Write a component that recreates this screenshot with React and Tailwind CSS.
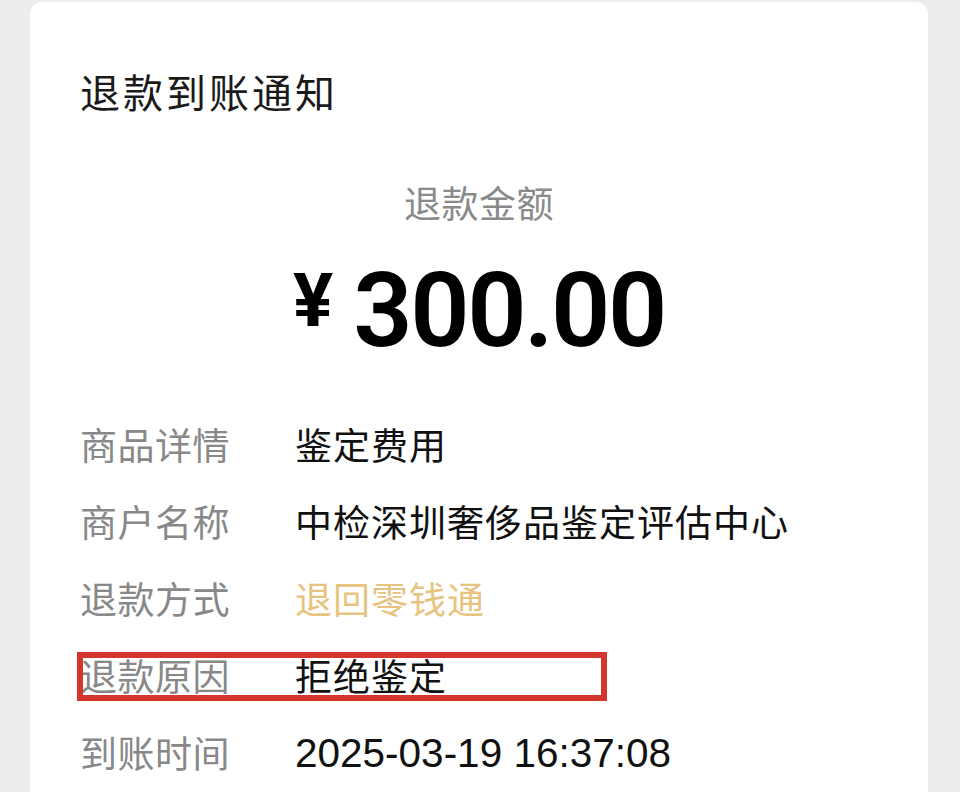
export default function App() {
  const cjk = "font-['Noto_Sans_CJK_SC',sans-serif]";
  const rows = [
    { label: "商品详情", value: "鉴定费用" },
    { label: "商户名称", value: "中检深圳奢侈品鉴定评估中心" },
    { label: "退款方式", value: "退回零钱通", gold: true },
    { label: "退款原因", value: "拒绝鉴定", boxed: true },
    { label: "到账时间", value: "2025-03-19 16:37:08", latin: true },
  ];
  return (
    <div className="w-[960px] h-[792px] bg-[#ededed] overflow-hidden pt-[2px] pl-[30px]">
      <div className="w-[898px] h-[820px] bg-white rounded-[12px] pt-[69px] px-[50px]">
        <div className={`${cjk} text-[40px] leading-[40px] tracking-[3px] text-[#1a1a1a]`}>
          退款到账通知
        </div>
        <div className={`${cjk} mt-[73px] text-center text-[37px] leading-[37px] tracking-[0.5px] text-[#8a8a8a]`}>
          退款金额
        </div>
        <div className="mt-[38px] flex justify-center items-start font-['Roboto',sans-serif] text-black">
          <span className="text-[75px] leading-[75px] font-bold mt-[4px] mr-[20px]">¥</span>
          <span className="text-[104px] leading-[104px] font-semibold tracking-[-2.5px]">300.00</span>
        </div>
        <div className="mt-[43px] flex flex-col">
          {rows.map((r) => (
            <div key={r.label} className="relative h-[77px] flex items-center">
              <div className={`${cjk} w-[215px] text-[37px] leading-[37px] tracking-[0.5px] text-[#888888]`}>{r.label}</div>
              <div
                className={
                  r.latin
                    ? "font-['Liberation_Sans',sans-serif] text-[40.5px] leading-[40px] text-[#111111]"
                    : r.gold
                    ? `${cjk} text-[37px] leading-[37px] tracking-[1px] text-[#e6c47f]`
                    : `${cjk} text-[37px] leading-[37px] tracking-[1px] text-[#111111]`
                }
              >
                {r.value}
              </div>
              {r.boxed && (
                <div className="absolute left-[-3px] top-[15px] w-[530px] h-[49px] border-[6px] border-[#d4352d]" />
              )}
            </div>
          ))}
        </div>
      </div>
    </div>
  );
}
